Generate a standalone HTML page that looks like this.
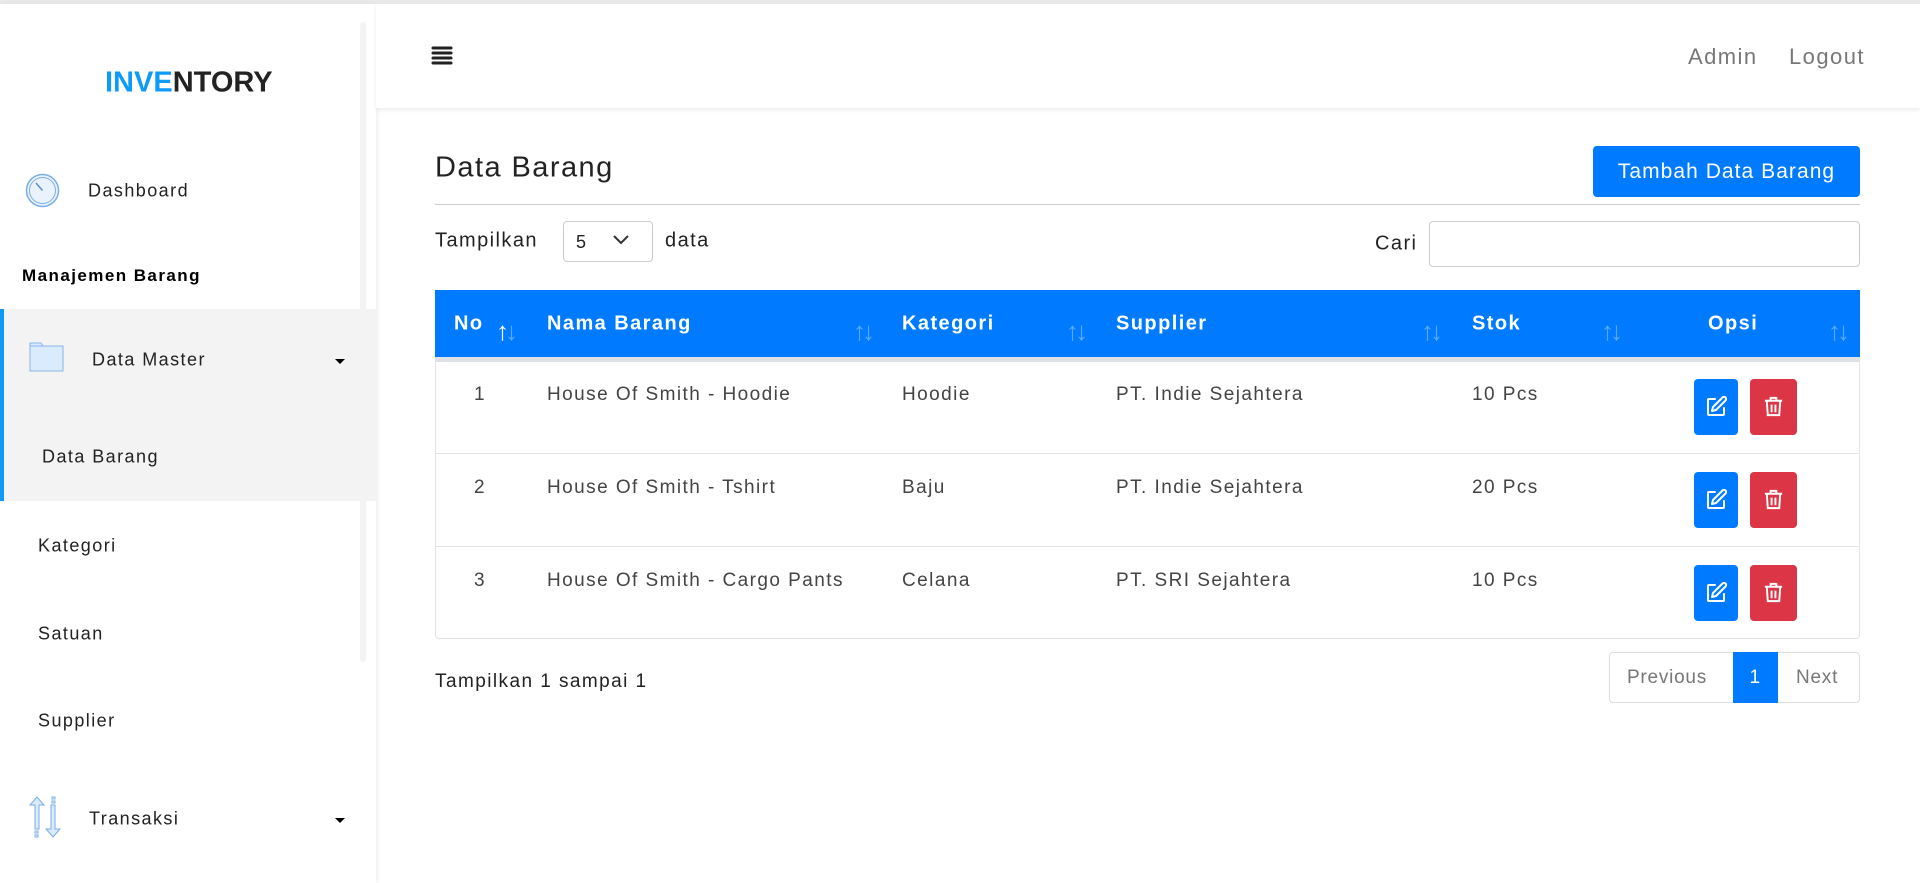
<!DOCTYPE html>
<html><head><meta charset="utf-8"><style>
*{box-sizing:border-box;margin:0;padding:0}
body{width:1920px;height:883px;overflow:hidden;background:#fff;font-family:"Liberation Sans",sans-serif;color:#222;position:relative;letter-spacing:0.09em}
.a{position:absolute;white-space:nowrap}
.mid{transform:translateY(-50%)}
.th{color:#fff;font-weight:bold;font-size:20px}
.td{color:#444;font-size:19px}
.sort{color:rgba(255,255,255,.35);font-size:26px;letter-spacing:-4px}
.btn{position:absolute;width:44px;height:56px;border-radius:4px}
</style></head><body>
<div class="a" style="left:0;top:0;width:1920px;height:4px;background:#e9e9e9"></div>
<!-- sidebar -->
<div class="a" style="left:0;top:4px;width:376px;height:879px;background:#fff;box-shadow:2px 0 4px rgba(0,0,0,.06)"></div>
<div class="a" style="left:360px;top:22px;width:6px;height:640px;background:#f3f3f3;border-radius:3px"></div>
<div class="a mid" style="left:105px;top:83px;font-size:29px;font-weight:bold;letter-spacing:0"><span style="color:#0d9bf7">INVE</span>NTORY</div>
<svg class="a" style="left:25px;top:173px" width="35" height="35" viewBox="0 0 35 35"><circle cx="17.5" cy="17.5" r="16" fill="#eaf3fd" stroke="#7aaee6" stroke-width="1.5"/><circle cx="17.5" cy="17.5" r="13" fill="none" stroke="#7aaee6"/><line x1="11" y1="10" x2="17.5" y2="17.5" stroke="#5a8fd0" stroke-width="1.5"/></svg>
<div class="a mid" style="left:88px;top:191px;font-size:18px">Dashboard</div>
<div class="a mid" style="left:22px;top:276px;font-size:17px;font-weight:bold;color:#000">Manajemen Barang</div>
<div class="a" style="left:0;top:309px;width:376px;height:192px;background:#f3f3f3"></div>
<div class="a" style="left:0;top:309px;width:4px;height:192px;background:#0d9bf7"></div>
<svg class="a" style="left:29px;top:342px" width="35" height="30" viewBox="0 0 35 30"><path d="M1 1h11l2 3h20v25H1z" fill="#d9ebfd" stroke="#8ab6ea"/><line x1="1" y1="4" x2="14" y2="4" stroke="#8ab6ea"/></svg>
<div class="a mid" style="left:92px;top:360px;font-size:18px">Data Master</div>
<div class="a" style="left:335px;top:359px;border:5px solid transparent;border-top:5px solid #000;border-bottom:0"></div>
<div class="a mid" style="left:42px;top:457px;font-size:18px">Data Barang</div>
<div class="a mid" style="left:38px;top:546px;font-size:18px">Kategori</div>
<div class="a mid" style="left:38px;top:634px;font-size:18px">Satuan</div>
<div class="a mid" style="left:38px;top:721px;font-size:18px">Supplier</div>
<svg class="a" style="left:28px;top:796px" width="34" height="42" viewBox="0 0 34 42"><path d="M9 1L2 9h5v24h4V9h5z" fill="#dbeafc" stroke="#7aaee6"/><path d="M25 41l7-8h-5V9h-4v24h-5z" fill="#dbeafc" stroke="#7aaee6"/><rect x="7" y="35" width="3" height="2" fill="none" stroke="#7aaee6"/><rect x="7" y="39" width="3" height="2" fill="none" stroke="#7aaee6"/><rect x="24" y="1" width="3" height="2" fill="none" stroke="#7aaee6"/><rect x="24" y="5" width="3" height="2" fill="none" stroke="#7aaee6"/></svg>
<div class="a mid" style="left:89px;top:819px;font-size:18px">Transaksi</div>
<div class="a" style="left:335px;top:818px;border:5px solid transparent;border-top:5px solid #000;border-bottom:0"></div>
<!-- header -->
<div class="a" style="left:376px;top:4px;width:1544px;height:104px;background:#fff;box-shadow:0 2px 4px rgba(0,0,0,.08)"></div>
<svg class="a" style="left:431px;top:45px" width="22" height="22" viewBox="0 0 22 22"><g stroke="#222" stroke-width="3" stroke-linecap="round"><line x1="2" y1="3" x2="20" y2="3"/><line x1="2" y1="8" x2="20" y2="8"/><line x1="2" y1="13" x2="20" y2="13"/><line x1="2" y1="18" x2="20" y2="18"/></g></svg>
<div class="a mid" style="left:1688px;top:57px;font-size:22px;color:#777">Admin</div>
<div class="a mid" style="left:1789px;top:57px;font-size:22px;color:#777">Logout</div>
<!-- content -->
<div class="a mid" style="left:435px;top:168px;font-size:29px;color:#222">Data Barang</div>
<div class="a" style="left:1593px;top:146px;width:267px;height:51px;background:#007bff;border-radius:4px;color:#fff;font-size:21px;text-align:center;line-height:51px;letter-spacing:0.05em">Tambah Data Barang</div>
<div class="a" style="left:435px;top:204px;width:1425px;height:1px;background:#ccc"></div>
<div class="a mid" style="left:435px;top:241px;font-size:20px">Tampilkan</div>
<div class="a" style="left:563px;top:221px;width:90px;height:41px;border:1px solid #ccc;border-radius:4px;font-size:18px;padding:10px 12px">5</div>
<svg class="a" style="left:613px;top:235px" width="16" height="10" viewBox="0 0 16 10"><path d="M1 1l7 7 7-7" fill="none" stroke="#333" stroke-width="2"/></svg>
<div class="a mid" style="left:665px;top:241px;font-size:20px">data</div>
<div class="a mid" style="left:1375px;top:244px;font-size:20px">Cari</div>
<div class="a" style="left:1429px;top:221px;width:431px;height:46px;border:1px solid #ccc;border-radius:4px"></div>
<!-- table -->
<div class="a" style="left:435px;top:290px;width:1425px;height:349px;border:1px solid #e3e3e3;border-top:0;border-radius:0 0 4px 4px"></div>
<div class="a" style="left:435px;top:290px;width:1425px;height:67px;background:#007bff"></div>
<div class="a" style="left:435px;top:357px;width:1425px;height:5px;background:#dee2e6"></div>
<div class="a" style="left:435px;top:453px;width:1425px;height:1px;background:#e3e3e3"></div>
<div class="a" style="left:435px;top:546px;width:1425px;height:1px;background:#e3e3e3"></div>
<div class="a th mid" style="left:454px;top:324px">No</div>
<div class="a th mid" style="left:547px;top:324px">Nama Barang</div>
<div class="a th mid" style="left:902px;top:324px">Kategori</div>
<div class="a th mid" style="left:1116px;top:324px">Supplier</div>
<div class="a th mid" style="left:1472px;top:324px">Stok</div>
<div class="a th mid" style="left:1708px;top:324px">Opsi</div>
<div class="a sort" style="left:496px;top:316px"><span style="color:#fff">↑</span>↓</div>
<div class="a sort" style="left:853px;top:316px">↑↓</div>
<div class="a sort" style="left:1066px;top:316px">↑↓</div>
<div class="a sort" style="left:1421px;top:316px">↑↓</div>
<div class="a sort" style="left:1601px;top:316px">↑↓</div>
<div class="a sort" style="left:1828px;top:316px">↑↓</div>
<div class="a td mid" style="left:474px;top:395px">1</div>
<div class="a td mid" style="left:547px;top:395px">House Of Smith - Hoodie</div>
<div class="a td mid" style="left:902px;top:395px">Hoodie</div>
<div class="a td mid" style="left:1116px;top:395px">PT. Indie Sejahtera</div>
<div class="a td mid" style="left:1472px;top:395px">10 Pcs</div>
<div class="a td mid" style="left:474px;top:488px">2</div>
<div class="a td mid" style="left:547px;top:488px">House Of Smith - Tshirt</div>
<div class="a td mid" style="left:902px;top:488px">Baju</div>
<div class="a td mid" style="left:1116px;top:488px">PT. Indie Sejahtera</div>
<div class="a td mid" style="left:1472px;top:488px">20 Pcs</div>
<div class="a td mid" style="left:474px;top:581px">3</div>
<div class="a td mid" style="left:547px;top:581px">House Of Smith - Cargo Pants</div>
<div class="a td mid" style="left:902px;top:581px">Celana</div>
<div class="a td mid" style="left:1116px;top:581px">PT. SRI Sejahtera</div>
<div class="a td mid" style="left:1472px;top:581px">10 Pcs</div>
<!-- buttons -->
<svg width="0" height="0" style="position:absolute"><defs>
<symbol id="ed" viewBox="0 0 24 24"><path d="M11 4H5a1 1 0 0 0-1 1v14a1 1 0 0 0 1 1h14a1 1 0 0 0 1-1v-6" fill="none" stroke="#fff" stroke-width="2" stroke-linecap="round"/><path d="M18.5 2.5a2.1 2.1 0 0 1 3 3L12 15l-4 1 1-4z" fill="none" stroke="#fff" stroke-width="2" stroke-linejoin="round"/></symbol>
<symbol id="tr" viewBox="0 0 24 24"><path d="M3 6h18M9 6V3h6v3M5 6l1 15h12l1-15M10 10v8M14 10v8" fill="none" stroke="#fff" stroke-width="2"/></symbol>
</defs></svg>
<div class="btn" style="left:1694px;top:379px;background:#007bff"><svg style="margin:16px 0 0 10px" width="24" height="24"><use href="#ed"/></svg></div>
<div class="btn" style="left:1750px;top:379px;background:#dc3545;width:47px"><svg style="margin:16px 0 0 12px" width="23" height="23"><use href="#tr"/></svg></div>
<div class="btn" style="left:1694px;top:472px;background:#007bff"><svg style="margin:16px 0 0 10px" width="24" height="24"><use href="#ed"/></svg></div>
<div class="btn" style="left:1750px;top:472px;background:#dc3545;width:47px"><svg style="margin:16px 0 0 12px" width="23" height="23"><use href="#tr"/></svg></div>
<div class="btn" style="left:1694px;top:565px;background:#007bff"><svg style="margin:16px 0 0 10px" width="24" height="24"><use href="#ed"/></svg></div>
<div class="btn" style="left:1750px;top:565px;background:#dc3545;width:47px"><svg style="margin:16px 0 0 12px" width="23" height="23"><use href="#tr"/></svg></div>
<!-- footer -->
<div class="a mid" style="left:435px;top:682px;font-size:19px">Tampilkan 1 sampai 1</div>
<div class="a" style="left:1609px;top:652px;width:251px;height:51px;border:1px solid #ddd;border-radius:4px"></div>
<div class="a mid" style="left:1627px;top:678px;font-size:19px;color:#777;letter-spacing:0.04em">Previous</div>
<div class="a" style="left:1733px;top:652px;width:45px;height:51px;background:#007bff;color:#fff;font-size:19px;text-align:center;line-height:51px">1</div>
<div class="a mid" style="left:1796px;top:678px;font-size:19px;color:#777;letter-spacing:0.04em">Next</div>
</body></html>
